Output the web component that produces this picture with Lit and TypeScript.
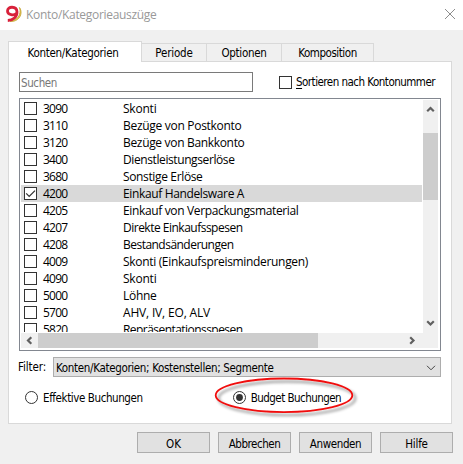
import { LitElement, html, css, svg } from "lit";
import { customElement, property } from "lit/decorators.js";
import { classMap } from "lit/directives/class-map.js";

/** Single-line label whose tracking is adjusted to a given advance width. */
@customElement("ui-label")
class UiLabel extends LitElement {
  @property() text = "";
  @property({ type: Number }) span = 0;
  static styles = css`
    :host { display: inline-block; white-space: pre; flex: none; }
    .key { text-decoration: underline; text-underline-offset: 2px; text-decoration-thickness: 1px; }
  `;
  @property({ type: Boolean }) mnemonic = false;
  render() {
    return this.mnemonic
      ? html`<span class="run"><span class="key">${this.text[0]}</span>${this.text.slice(1)}</span>`
      : html`<span class="run">${this.text}</span>`;
  }
  firstUpdated() {
    const run = this.renderRoot.querySelector(".run") as HTMLElement;
    const natural = run.getBoundingClientRect().width;
    if (this.span && natural) run.style.letterSpacing = `${(this.span - natural) / this.text.length}px`;
  }
}

const label = (text: string, span: number, mnemonic = false) =>
  html`<ui-label .text=${text} .span=${span} .mnemonic=${mnemonic}></ui-label>`;

@customElement("app-root")
class AppRoot extends LitElement {
  tabs: [string, number, string][] = [
    ["Konten/Kategorien", 91, "t1"],
    ["Periode", 37.5, "t2"],
    ["Optionen", 45, "t3"],
    ["Komposition", 58.5, "t4"],
  ];
  rows: [string, string, number][] = [
    ["3090", "Skonti", 33.5],
    ["3110", "Bezüge von Postkonto", 118.5],
    ["3120", "Bezüge von Bankkonto", 121.5],
    ["3400", "Dienstleistungserlöse", 111.5],
    ["3680", "Sonstige Erlöse", 79.5],
    ["4200", "Einkauf Handelsware A", 121],
    ["4205", "Einkauf von Verpackungsmaterial", 175.5],
    ["4207", "Direkte Einkaufsspesen", 119.5],
    ["4208", "Bestandsänderungen", 110.5],
    ["4009", "Skonti (Einkaufspreisminderungen)", 185],
    ["4090", "Skonti", 33.5],
    ["5000", "Löhne", 33.5],
    ["5700", "AHV, IV, EO, ALV", 87],
    ["5820", "Repräsentationsspesen", 119.5],
  ];
  buttons: [string, number][] = [["OK", 15], ["Abbrechen", 51.5], ["Anwenden", 51.5], ["Hilfe", 22.5]];

  static styles = css`
    :host {
      display: flex; flex-direction: column; width: 463px; height: 464px; overflow: hidden;
      background: #f0f0f0; color: #000; font: 11.5px/16px "DejaVu Sans Condensed", "DejaVu Sans", sans-serif;
      box-sizing: border-box; cursor: default;
    }
    * { box-sizing: border-box; }
    svg { display: block; flex: none; }
    .title { height: 30px; flex: none; background: #fff; display: flex; align-items: center; padding: 0 7px 0 6px; color: #999; font: 12px/16px "Open Sans", "Noto Sans", sans-serif; }
    .title svg { margin-top: -2px; }
    .title ui-label { margin-left: 4px; }
    .title .close { margin-left: auto; }
    .tabs { display: flex; align-items: flex-end; height: 21px; margin: 11px 0 0 8px; flex: none; }
    .tab { height: 19px; border: 1px solid #d9d9d9; border-left: 0; display: flex; justify-content: center; align-items: center; padding-top: 1px; }
    .tab.active { height: 21px; background: #fff; border-left: 1px solid #d9d9d9; border-bottom: 0; }
    .t1 { width: 134px; padding-right: 4px; } .t2 { width: 65px; } .t3 { width: 75px; } .t4 { width: 92px; }
    .panel { margin-left: 8px; width: 444px; height: 362px; flex: none; background: #fff; border: 1px solid #d9d9d9; border-top: 0; display: flex; flex-direction: column; padding-left: 10px; }
    .panelTop { margin-left: 141px; width: 311px; height: 1px; background: #d9d9d9; margin-top: -1px; flex: none; }
    .search { display: flex; align-items: center; margin-top: 10px; height: 20px; flex: none; }
    .input { width: 234px; height: 20px; border: 1px solid #7a7a7a; color: #777; padding-left: 1px; display: flex; align-items: center; padding-top: 2px; margin-right: 26px; }
    .check { width: 13px; height: 13px; border: 1px solid #333; background: #fff; flex: none; }
    .search ui-label { margin-left: 4px; }
    .input ui-label { margin-left: 0; }
    .list { margin-top: 6px; width: 422px; height: 253px; flex: none; border: 1px solid #828790; display: grid; grid-template-columns: 401px 1px 15px; grid-template-rows: 232px 1px 15px; padding: 1px; }
    .rows { overflow: hidden; font: 12px/16px "Open Sans", "Noto Sans", sans-serif; }
    .row { height: 17px; display: flex; align-items: center; padding-left: 3px; }
    .row.on { background: #d9d9d9; }
    .code { width: 80px; margin-left: 6px; }
    .vbar { grid-column: 3; grid-row: 1 / 3; background: #f0f0f0; display: flex; flex-direction: column; justify-content: space-between; }
    .vbar .thumb { height: 67px; margin-top: 16px; background: #cdcdcd; }
    .hbar { grid-column: 1 / 4; grid-row: 3; background: #f0f0f0; display: flex; align-items: center; }
    .hbar .thumb { width: 280px; height: 15px; background: #cdcdcd; }
    .vbar .down { margin-top: auto; }
    .hbar .right { margin-left: auto; margin-right: 17px; }
    .filter { display: flex; align-items: center; height: 20px; margin-top: 6px; flex: none; margin-left: -1px; }
    .combo { width: 388px; height: 20px; border: 1px solid #adadad; background: #e1e1e1; display: flex; align-items: center; justify-content: space-between; padding: 2px 4px 0 2px; margin-left: 7px; }
    .radios { display: flex; height: 14px; align-items: center; margin: 13px 0 0 6px; flex: none; position: relative; }
    .radios ui-label { margin: 2px 0 0 4px; }
    .second { display: flex; align-items: center; margin-left: 90px; }
    .ring { position: absolute; left: 188px; top: -15px; }
    .buttons { display: flex; gap: 8px; margin: 8px 0 0 137px; flex: none; }
    .button { width: 73px; height: 21px; border: 1px solid #adadad; background: #e1e1e1; display: flex; align-items: center; justify-content: center; padding-top: 2px; }
  `;

  arrow(d: string, w: number, h: number, cls: string) {
    return html`<svg class=${cls} width=${w} height=${h} viewBox="0 0 ${w} ${h}"><path d=${d} fill="none" stroke="#606060" stroke-width="2.2"/></svg>`;
  }
  radio(on: boolean) {
    return html`<svg width="14" height="14" viewBox="0 0 14 14"><circle cx="6.5" cy="7.5" r="6" fill="#fff" stroke="#333"/>${on ? svg`<circle cx="6.5" cy="7.5" r="3.4" fill="#333"/>` : ""}</svg>`;
  }

  render() {
    return html`
      <div class="title">
        <svg width="16" height="18" viewBox="0 0 16 18">
          <path d="M13.4 2.5C15 6 14 13 8.2 14.8L4 16.2C9 17.3 14.7 13.5 15 8C15.2 5.8 14.4 3.5 13.4 2.5Z" fill="#efd04a" stroke="#c4a63c" stroke-width=".9"/>
          <path d="M10.3 8.4C8 10.9 1.5 10 1.5 6.1C1.5.9 10.6.8 11 6.8C11.2 11.8 7 15.3 1.8 15.5" fill="none" stroke="#d8213a" stroke-width="2.8"/>
        </svg>
        ${label("Konto/Kategorieauszüge", 130.5)}
        <svg class="close" width="12" height="12" viewBox="0 0 12 12"><path d="M1 1L11 11M11 1L1 11" stroke="#8c8c8c" stroke-width="1"/></svg>
      </div>
      <div class="tabs">
        ${this.tabs.map(([t, w, c], i) => html`<div class=${classMap({ tab: true, active: i === 0, [c]: true })}>${label(t, w)}</div>`)}
      </div>
      <div class="panelTop"></div>
      <div class="panel">
        <div class="search">
          <div class="input">${label("Suchen", 36)}</div>
          <div class="check"></div>
          ${label("Sortieren nach Kontonummer", 139, true)}
        </div>
        <div class="list">
          <div class="rows">
            ${this.rows.map(([code, name, w]) => html`
              <div class=${classMap({ row: true, on: code === "4200" })}>
                <div class="check">${code === "4200" ? html`<svg width="11" height="11" viewBox="0 0 11 11"><path d="M1.2 5.4L4.2 8.4L10 2.6" fill="none" stroke="#333" stroke-width="1.3"/></svg>` : ""}</div>
                <div class="code">${label(code, 24.5)}</div>
                ${label(name, w)}
              </div>`)}
          </div>
          <div class="vbar">
            ${this.arrow("M4.2 11.3L7.5 8L10.8 11.3", 15, 17, "up")}
            <div class="thumb"></div>
            ${this.arrow("M4.2 5.2L7.5 8.5L10.8 5.2", 15, 17, "down")}
          </div>
          <div class="hbar">
            ${this.arrow("M10.3 4.2L7 7.5L10.3 10.8", 17, 15, "left")}
            <div class="thumb"></div>
            ${this.arrow("M6.2 4.2L9.5 7.5L6.2 10.8", 17, 15, "right")}
          </div>
        </div>
        <div class="filter">
          ${label("Filter:", 28)}
          <div class="combo">
            ${label("Konten/Kategorien; Kostenstellen; Segmente", 217.5)}
            <svg width="10" height="6" viewBox="0 0 10 6"><path d="M1 .8L5 4.8L9 .8" fill="none" stroke="#444"/></svg>
          </div>
        </div>
        <div class="radios">
          ${this.radio(false)}${label("Effektive Buchungen", 99.5)}
          <div class="second">${this.radio(true)}${label("Budget Buchungen", 90.5)}</div>
          <svg class="ring" width="146" height="46" viewBox="0 0 146 46">
            <defs><filter id="s" x="-10%" y="-20%" width="120%" height="150%"><feDropShadow dx="3" dy="3" stdDeviation="1.5" flood-color="#000" flood-opacity=".45"/></filter></defs>
            <ellipse cx="71" cy="20.3" rx="68.3" ry="16.8" fill="none" stroke="#f01010" stroke-width="1.8" filter="url(#s)"/>
          </svg>
        </div>
      </div>
      <div class="buttons">${this.buttons.map(([t, w]) => html`<div class="button">${label(t, w)}</div>`)}</div>
    `;
  }
}
